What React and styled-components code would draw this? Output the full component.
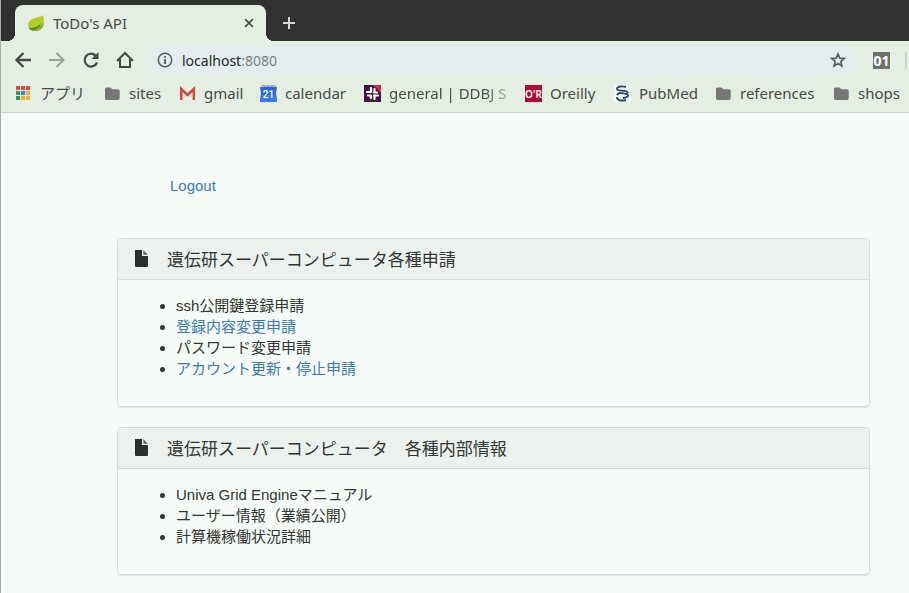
import React from "react";
import styled, { createGlobalStyle } from "styled-components";

const Global = createGlobalStyle`
  *, *::before, *::after { box-sizing: border-box; }
  body {
    margin: 0;
    background: #f6fbf7;
    color: #333633;
    font-family: "Liberation Sans", "Noto Sans CJK JP", sans-serif;
    font-size: 15px;
    line-height: 21px;
  }
  button { border: 0; padding: 0; background: none; color: inherit; font: inherit; cursor: pointer; }
  svg { display: block; }
`;

const Window = styled.div`
  min-height: 100vh;
  border-left: 1px solid #a9aca8;
  overflow: hidden;
`;

const Chrome = styled.header`
  margin-left: -1px;
  background: #e4eee3;
  border-bottom: 1px solid #cdd2cc;
  color: #484b47;
  font-family: "Noto Sans", "Noto Sans CJK JP", sans-serif;
  font-size: 15px;
`;

const TabStrip = styled.div`
  display: flex;
  align-items: flex-end;
  height: 41px;
  padding-left: 15px;
  background: #2f322f;
`;

const Tab = styled.div`
  position: relative;
  display: flex;
  align-items: center;
  width: 251px;
  height: 36px;
  padding: 0 10px 0 12px;
  gap: 8px;
  border-radius: 8px 8px 0 0;
  background: #e4eee3;
  &::before, &::after {
    content: "";
    position: absolute;
    bottom: 0;
    width: 8px;
    height: 8px;
  }
  &::before { right: 100%; background: radial-gradient(circle at 0 0, transparent 8px, #e4eee3 8px); }
  &::after { left: 100%; background: radial-gradient(circle at 100% 0, transparent 8px, #e4eee3 8px); }
`;

const TabTitle = styled.span`
  flex: 1;
  font-size: 15px;
`;

const IconButton = styled.button`
  display: grid;
  place-items: center;
  flex: none;
  width: ${(p) => p.$size || 18}px;
  height: ${(p) => p.$size || 18}px;
  color: ${(p) => p.$color || "#454845"};
`;

const NewTab = styled(IconButton)`
  align-self: center;
  margin: 5px 0 0 14px;
`;

const Toolbar = styled.div`
  display: flex;
  align-items: center;
  height: 38px;
  padding: 0 2px 0 14px;
`;

const NavButtons = styled.nav`
  display: flex;
  gap: 16px;
  margin-right: 13px;
`;

const Omnibox = styled.div`
  display: flex;
  align-items: center;
  flex: 1;
  min-width: 0;
  height: 30px;
  padding: 0 10px 0 9px;
  gap: 8px;
  border-radius: 15px;
  background: #e4ecee;
`;

const Address = styled.div`
  flex: 1;
  min-width: 0;
  font-size: 14px;
  color: #7b807f;
  b { font-weight: 400; color: #262927; }
`;

const Extension = styled.button`
  && {
    width: 17px;
    height: 17px;
    margin: 0 15px 0 16px;
    background: #6d706d;
    color: #fff;
    font: bold 14px/17px "Noto Sans", sans-serif;
  }
`;

const Divider = styled.span`
  width: 2px;
  height: 17px;
  background: #cdd3cc;
`;

const Bookmarks = styled.nav`
  display: flex;
  align-items: center;
  height: 33px;
  padding: 0 0 4px 15px;
`;

const Bookmark = styled.a`
  display: flex;
  align-items: center;
  flex: none;
  gap: 8px;
  width: ${(p) => p.$width}px;
  color: inherit;
  text-decoration: none;
  white-space: nowrap;
  svg { flex: none; }
`;

const BookmarkLabel = styled.span`
  ${(p) =>
    p.$fade &&
    `
    mask-image: linear-gradient(90deg, #000 80%, transparent 110%);
  `}
`;

const Page = styled.main`
  padding: 62px 39px 18px 116px;
`;

const TopLink = styled.div`
  padding: 0 0 42px 53px;
`;

const Link = styled.a`
  color: #3c7ab4;
  text-decoration: none;
`;

const Panel = styled.section`
  margin-bottom: 20px;
  border: 1px solid #d7dcd8;
  border-radius: 4px;
  box-shadow: 0 1px 1px rgba(0, 0, 0, 0.08);
`;

const PanelHeading = styled.h3`
  display: flex;
  align-items: center;
  gap: 18px;
  height: 41px;
  margin: 0;
  padding: 2px 16px 0;
  border-bottom: 1px solid #d7dcd8;
  border-radius: 3px 3px 0 0;
  background: #edf1ee;
  font-size: 17px;
  font-weight: 400;
  svg { margin-bottom: 4px; flex: none; }
`;

const PanelList = styled.ul`
  margin: 0;
  padding: 15px 16px 27px 58px;
`;

const LeafIcon = () => (
  <svg width="18" height="18" viewBox="0 0 18 18">
    <path d="M16 1C14 4 4 3 2 8C0 12 2 16 6 17C14 18 19 12 16 1Z" fill="#b5cb24" />
    <path d="M17 8C15 12 10 14 2 14C3 16 5 17 7 17C13 17 17 14 17 8Z" fill="#7fb428" />
    <path d="M2 14C8 14 12 12 14 9C13 14 8 17 2 15Z" fill="#4c8b32" />
  </svg>
);

const Stroke = ({ d, size = 18, width = 2 }) => (
  <svg width={size} height={size} viewBox="0 0 18 18" fill="none" stroke="currentColor" strokeWidth={width}>
    <path d={d} />
  </svg>
);

const ReloadIcon = () => (
  <svg width="18" height="18" viewBox="0 0 18 18">
    <path d="M15 11.5A6.4 6.4 0 1 1 13.6 4.6" fill="none" stroke="currentColor" strokeWidth="2.2" />
    <path d="M16.5 1V8H9.5Z" fill="currentColor" />
  </svg>
);

const InfoIcon = () => (
  <svg width="18" height="18" viewBox="0 0 18 18">
    <circle cx="9" cy="9" r="6.7" fill="none" stroke="#5b5f5d" strokeWidth="1.5" />
    <path d="M9 8V13M9 5V6.8" stroke="#5b5f5d" strokeWidth="1.9" />
  </svg>
);

const StarIcon = () => (
  <svg width="18" height="18" viewBox="0 0 18 18">
    <path
      d="M9 3L10.8 7.2L15.2 7.5L11.8 10.5L12.9 15L9 12.6L5.1 15L6.2 10.5L2.8 7.5L7.2 7.2Z"
      fill="none"
      stroke="currentColor"
      strokeWidth="1.7"
    />
  </svg>
);

const AppsIcon = () => {
  const colors = ["#dc4b3e", "#dc4b3e", "#dc4b3e", "#36945b", "#3c80df", "#edb32e", "#36945b", "#edb32e", "#edb32e"];
  return (
    <svg width="17" height="17" viewBox="0 0 17 17">
      {colors.map((c, i) => (
        <rect key={i} x={1 + (i % 3) * 5} y={1 + Math.floor(i / 3) * 5} width="4" height="4" fill={c} />
      ))}
    </svg>
  );
};

const FolderIcon = () => (
  <svg width="17" height="17" viewBox="0 0 17 17">
    <path d="M2.5 2.5H6.5L8.2 4.3H14Q15.7 4.3 15.7 5.8V13.3Q15.7 15 14 15H2.5Q1 15 1 13.3V4Q1 2.5 2.5 2.5Z" fill="#747774" />
  </svg>
);

const GmailIcon = () => (
  <svg width="17" height="17" viewBox="0 0 17 17">
    <path d="M2 3H15V15H2Z" fill="#eeeeea" />
    <path d="M3 14L8.5 9L14 14" fill="none" stroke="#d0d0cc" />
    <path d="M2.2 15V4L8.5 10L14.8 4V15" fill="none" stroke="#cf4b3f" strokeWidth="2.5" />
  </svg>
);

const CalendarIcon = () => (
  <svg width="17" height="17" viewBox="0 0 17 17">
    <path d="M1 0H16V3H1Z" fill="#b9bdba" />
    <path d="M4 0V2M8 0V2M12 0V2" stroke="#858a87" />
    <path d="M0 2H17L16 8L17 17H0L1 8Z" fill="#2f67d5" />
    <path d="M1 10H16L17 17H0Z" fill="#3b78e7" />
    <text x="8.5" y="13" textAnchor="middle" fontFamily="Roboto, sans-serif" fontSize="10" fontWeight="500" fill="#fff">21</text>
  </svg>
);

const SlackIcon = () => (
  <svg width="17" height="17" viewBox="0 0 17 17">
    <rect width="17" height="17" fill="#42173f" />
    <path d="M9 0H17V8Z" fill="#d52750" />
    <path
      d="M7 3V7M10.5 4V6.5M3 7H7M10 7.5H13M4 10.5H7M10 10.5H14M7 10.5V13M10.5 10.5V14"
      stroke="#fff"
      strokeWidth="2.2"
      strokeLinecap="round"
    />
  </svg>
);

const OreillyIcon = () => (
  <svg width="17" height="17" viewBox="0 0 17 17">
    <rect width="17" height="17" fill="#b20a32" />
    <text x="8.5" y="13" textAnchor="middle" fontFamily="Noto Sans, sans-serif" fontSize="10" fontWeight="600" fill="#fff">O'R</text>
  </svg>
);

const PubmedIcon = () => (
  <svg width="17" height="17" viewBox="0 0 17 17">
    <rect width="17" height="17" fill="#f2f5f4" />
    <g fill="none" stroke="#2b4a70" strokeWidth="1.9">
      <path d="M12 2C9 1 3 1 3 4C3 7 13 4 14 8" />
      <path d="M3 10C5 6 9 9 13 9C16 11 12 13 9 13M3 12C3 16 8 16 12 15" />
    </g>
  </svg>
);

const FileIcon = () => (
  <svg width="15" height="18" viewBox="0 0 15 18" fill="#2c302d">
    <path d="M1 1H8V7H14V17Q14 18 13 18H2Q1 18 1 17Z" />
    <path d="M9.3 1L14 5.7H9.3Z" fill="#5d6765" />
  </svg>
);

const bookmarks = [
  { label: "アプリ", icon: AppsIcon, width: 89 },
  { label: "sites", icon: FolderIcon, width: 75 },
  { label: "gmail", icon: GmailIcon, width: 81 },
  { label: "calendar", icon: CalendarIcon, width: 104 },
  { label: "general | DDBJ S", icon: SlackIcon, width: 161, fade: true },
  { label: "Oreilly", icon: OreillyIcon, width: 89 },
  { label: "PubMed", icon: PubmedIcon, width: 101 },
  { label: "references", icon: FolderIcon, width: 118 },
  { label: "shops", icon: FolderIcon, width: 76 },
];

const panels = [
  {
    title: "遺伝研スーパーコンピュータ各種申請",
    items: [
      { text: "ssh公開鍵登録申請" },
      { text: "登録内容変更申請", link: true },
      { text: "パスワード変更申請" },
      { text: "アカウント更新・停止申請", link: true },
    ],
  },
  {
    title: "遺伝研スーパーコンピュータ　各種内部情報",
    items: [{ text: "Univa Grid Engineマニュアル" }, { text: "ユーザー情報（業績公開）" }, { text: "計算機稼働状況詳細" }],
  },
];

export default function App() {
  return (
    <Window>
      <Global />
      <Chrome>
        <TabStrip>
          <Tab>
            <LeafIcon />
            <TabTitle>ToDo's API</TabTitle>
            <IconButton $size={14} aria-label="Close tab">
              <Stroke size={14} d="M4 4L14 14M14 4L4 14" />
            </IconButton>
          </Tab>
          <NewTab $color="#d6dad5" aria-label="New tab">
            <Stroke d="M9 3V15M3 9H15" />
          </NewTab>
        </TabStrip>
        <Toolbar>
          <NavButtons>
            <IconButton aria-label="Back"><Stroke width={2.3} d="M17 9H3M9.5 2L2.5 9L9.5 16" /></IconButton>
            <IconButton $color="#9ca19b" aria-label="Forward"><Stroke d="M1 9H15M8.5 2L15.5 9L8.5 16" /></IconButton>
            <IconButton aria-label="Reload"><ReloadIcon /></IconButton>
            <IconButton aria-label="Home"><Stroke d="M1 10L9 2L17 10M4 8V16H14V8" /></IconButton>
          </NavButtons>
          <Omnibox>
            <InfoIcon />
            <Address><b>localhost</b>:8080</Address>
            <IconButton $color="#5b5f5d" aria-label="Bookmark this page"><StarIcon /></IconButton>
          </Omnibox>
          <Extension>01</Extension>
          <Divider />
        </Toolbar>
        <Bookmarks>
          {bookmarks.map(({ label, icon: Icon, width, fade }) => (
            <Bookmark key={label} href="#" $width={width}>
              <Icon />
              <BookmarkLabel $fade={fade}>{label}</BookmarkLabel>
            </Bookmark>
          ))}
        </Bookmarks>
      </Chrome>
      <Page>
        <TopLink><Link href="#">Logout</Link></TopLink>
        {panels.map((panel) => (
          <Panel key={panel.title}>
            <PanelHeading><FileIcon />{panel.title}</PanelHeading>
            <PanelList>
              {panel.items.map((item) => (
                <li key={item.text}>{item.link ? <Link href="#">{item.text}</Link> : item.text}</li>
              ))}
            </PanelList>
          </Panel>
        ))}
      </Page>
    </Window>
  );
}
